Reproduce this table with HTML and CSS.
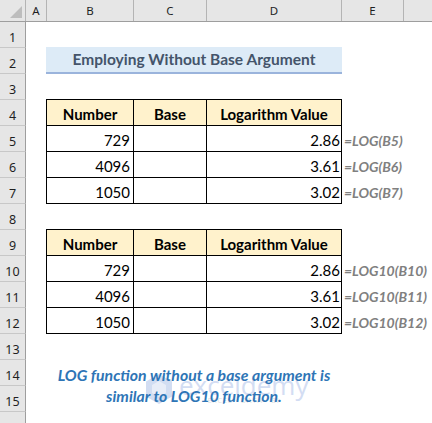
FILE: index.html
```html
<!DOCTYPE html>
<html>
<head>
<meta charset="utf-8">
<link rel="stylesheet" href="styles.css">
</head>
<body>
<div class="sheet">
  <div class="colhdr">
    <div class="corner"><span class="tri"></span></div>
    <div class="ch">A</div>
    <div class="ch">B</div>
    <div class="ch">C</div>
    <div class="ch">D</div>
    <div class="ch">E</div>
    <div class="ch last"></div>
  </div>
  <div class="main">
    <div class="rowhdr">
      <div class="rn">1</div><div class="rn">2</div><div class="rn">3</div><div class="rn">4</div>
      <div class="rn">5</div><div class="rn">6</div><div class="rn">7</div><div class="rn">8</div>
      <div class="rn">9</div><div class="rn">10</div><div class="rn">11</div><div class="rn">12</div>
      <div class="rn">13</div><div class="rn">14</div><div class="rn">15</div><div class="rn"></div>
    </div>
    <div class="content">
      <div class="title">Employing Without Base Argument</div>

      <div class="tbl">
        <div class="c hd first">Number</div><div class="c hd">Base</div><div class="c hd">Logarithm Value</div><div class="f"></div>
        <div class="c first num">729</div><div class="c"></div><div class="c val">2.86</div><div class="f">=LOG(B5)</div>
        <div class="c first num">4096</div><div class="c"></div><div class="c val">3.61</div><div class="f">=LOG(B6)</div>
        <div class="c first num">1050</div><div class="c"></div><div class="c val">3.02</div><div class="f">=LOG(B7)</div>
      </div>

      <div class="tbl">
        <div class="c hd first">Number</div><div class="c hd">Base</div><div class="c hd">Logarithm Value</div><div class="f"></div>
        <div class="c first num">729</div><div class="c"></div><div class="c val">2.86</div><div class="f">=LOG10(B10)</div>
        <div class="c first num">4096</div><div class="c"></div><div class="c val">3.61</div><div class="f">=LOG10(B11)</div>
        <div class="c first num">1050</div><div class="c"></div><div class="c val">3.02</div><div class="f">=LOG10(B12)</div>
      </div>

      <div class="note">LOG function without a base argument is<br>similar to LOG10 function.</div>
    </div>
  </div>
  <div class="wm">
    <svg class="wm-icon" width="28" height="32" viewBox="0 0 28 32"><path d="M14 1 L27 8.5 L27 23.5 L14 31 L1 23.5 L1 8.5 Z" fill="#d2ddf2"/><path d="M14 8 L21 12 L21 20 L14 24 L7 20 L7 12 Z" fill="#e8edf8"/></svg>
    <div class="wm-text">
      <div class="wm-name">exceldemy</div>
      <div class="wm-sub">EXCEL · DATA · BI</div>
    </div>
  </div>
</div>
</body>
</html>
```

FILE: styles.css
```css
* { box-sizing: border-box; }
html, body { margin: 0; padding: 0; }
body {
  width: 432px;
  height: 423px;
  overflow: hidden;
  background: #fff;
  font-family: Lato, "Liberation Sans", sans-serif;
  color: #000;
}
.sheet { position: relative; width: 432px; height: 423px; overflow: hidden; }

.colhdr {
  display: grid;
  grid-template-columns: 26px 21px 87px 73px 135px 62px 1fr;
  height: 22px;
  background: #e6e6e6;
  border-bottom: 1px solid #9e9e9e;
}
.corner { position: relative; border-right: 1px solid #b4b4b4; }
.tri {
  position: absolute;
  right: 3px;
  bottom: 3px;
  width: 0;
  height: 0;
  border-left: 12px solid transparent;
  border-bottom: 12px solid #bdbdbd;
}
.ch {
  border-right: 1px solid #b4b4b4;
  font-family: "Noto Sans", sans-serif;
  font-size: 11.5px;
  line-height: 21px;
  text-align: center;
  color: #1f1f1f;
}
.ch.last { border-right: none; }

.main { display: flex; }
.rowhdr { width: 26px; flex: none; display: flex; flex-direction: column; }
.rn {
  height: 26px;
  flex: none;
  background: #e6e6e6;
  border-right: 1px solid #9e9e9e;
  border-bottom: 1px solid #c8c8c8;
  font-family: "Noto Sans", sans-serif;
  font-size: 12.5px;
  text-align: center;
  display: flex;
  align-items: flex-end;
  justify-content: center;
  padding-bottom: 1px;
  color: #1f1f1f;
}

.content { flex: 1; padding-left: 20px; padding-top: 25px; position: relative; z-index: 1; }

.title {
  width: 296px;
  height: 27px;
  background: #ddebf7;
  border-bottom: 2px solid #9bb4dc;
  font-weight: 700;
  font-size: 15.5px;
  line-height: 25px;
  text-align: center;
  color: #44546a;
}

.tbl {
  margin-top: 25px;
  display: grid;
  grid-template-columns: 88px 73px 135px 1fr;
  grid-template-rows: 27px 26px 26px 26px;
}
.c {
  border-right: 1px solid #000;
  border-bottom: 1px solid #000;
  font-size: 15px;
  line-height: 18px;
  display: flex;
  align-items: flex-end;
  padding-bottom: 2px;
}
.c.first { border-left: 1px solid #000; }
.c.hd {
  border-top: 1px solid #000;
  background: #fff2cc;
  font-weight: 700;
  justify-content: center;
}
.c.num { justify-content: flex-end; padding-right: 3px; }
.c.val { justify-content: flex-end; padding-right: 1px; }
.f {
  font-size: 14px;
  line-height: 18px;
  font-weight: 700;
  font-style: italic;
  color: #808080;
  display: flex;
  align-items: flex-end;
  padding-bottom: 2px;
  padding-left: 2px;
  white-space: nowrap;
}

.note {
  width: 296px;
  margin-top: 30px;
  text-align: center;
  font-size: 15.8px;
  line-height: 21px;
  font-weight: 700;
  font-style: italic;
  color: #2e75b6;
}

.wm {
  position: absolute;
  left: 145px;
  top: 373px;
  display: flex;
  align-items: flex-start;
  gap: 6px;
  z-index: 0;
}
.wm-text { display: flex; flex-direction: column; align-items: center; }
.wm-name {
  font-family: "Open Sans", sans-serif;
  font-size: 26px;
  line-height: 24px;
  color: #d3ddf3;
}
.wm-sub {
  font-family: "Open Sans", sans-serif;
  font-size: 7px;
  line-height: 8px;
  color: #dedede;
  letter-spacing: 1px;
}
```
